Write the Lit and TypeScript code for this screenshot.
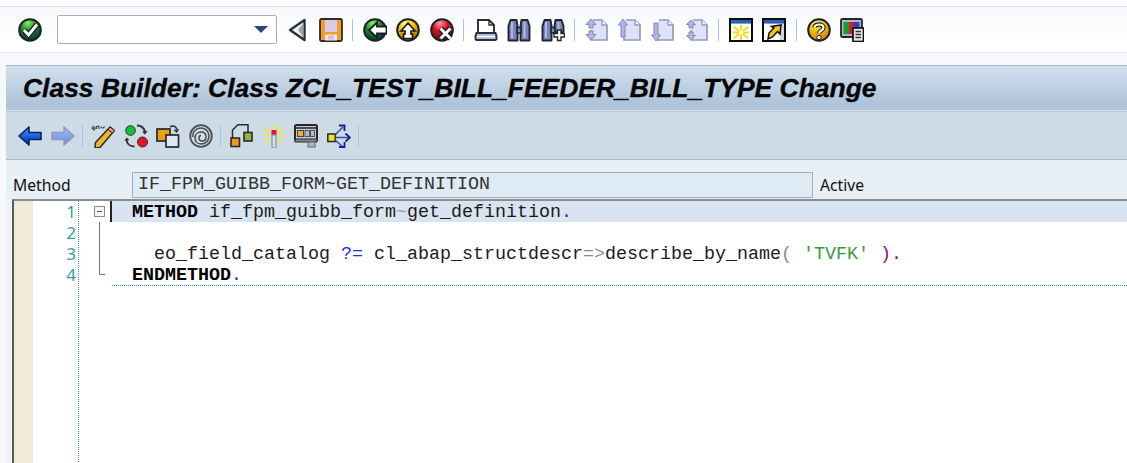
import { LitElement, html, css, svg } from "lit";
import { customElement } from "lit/decorators.js";

const sphere = (id: string, hi: string, mid: string, lo: string, glyph: unknown) => html`
  <svg viewBox="0 0 24 24" class="ic">
    <defs><radialGradient id=${id} cx=".4" cy=".18" r=".85">
      <stop offset="0" stop-color=${hi}></stop><stop offset=".42" stop-color=${mid}></stop><stop offset="1" stop-color=${lo}></stop>
    </radialGradient></defs>
    <circle cx="12" cy="12" r="10.8" fill=${`url(#${id})`} stroke="#1e2224" stroke-width="2"></circle>
    ${glyph}
  </svg>`;

const docGlyph = (inner: unknown) => html`
  <svg viewBox="0 0 24 24" class="ic">
    <path d="M8 2h9l5 5v15H6V12" fill="#e0e0f6" stroke="#9499bc" stroke-width="1.7"></path>
    <path d="M17 2v5h5" fill="#fff" stroke="#9499bc" stroke-width="1.3"></path>
    ${inner}
  </svg>`;

const winIcon = (inner: unknown) => html`
  <svg viewBox="0 0 24 24" class="ic">
    <rect x="1" y="1" width="22" height="22" fill="#fff" stroke="#0c0c0c" stroke-width="2"></rect>
    <rect x="2" y="2" width="20" height="3.6" fill="#2a62b4"></rect>
    ${inner}
  </svg>`;

const arrowUD = "#b0b5e2";

const icons = {
  check: sphere("gChk", "#8cf06a", "#1c8a2c", "#0a2c3a", svg`<path d="M6 12l4.500 5L19 6.500" fill="none" stroke="#1c1c1c" stroke-width="5.200"></path><path d="M6 12l4.500 5L19 6.500" fill="none" stroke="#fff" stroke-width="2.900"></path>`),
  tri: html`<svg viewBox="0 0 24 24" class="ic"><path d="M19.500 2L5 12l14.500 10z" fill="#f0f2f6" stroke="#2c3038" stroke-width="2.400" stroke-linejoin="round"></path><path d="M18.500 4.500v15L13 12z" fill="#9ea3aa"></path></svg>`,
  save: html`<svg viewBox="0 0 24 24" class="ic">
    <rect x="1" y="1" width="22" height="22" rx="1.500" fill="#f0a028" stroke="#2e2c28" stroke-width="1.800"></rect>
    <rect x="6" y="2" width="12" height="12" fill="#dccbe8"></rect>
    <rect x="6" y="16.500" width="12" height="6" fill="#efe6ee"></rect><rect x="9" y="17.500" width="6" height="4" fill="#cfc4d6"></rect>
  </svg>`,
  back: sphere("gBack", "#8cf06a", "#1c8a2c", "#0a2c3a", svg`<path d="M23.500 8.500h-9.500V4.500L6 12l8 7.500v-4h9.500z" fill="#fff" stroke="#1c1c1c" stroke-width="1.800"></path>`),
  up: sphere("gUp", "#fff8a8", "#f2c800", "#9a5c10", svg`<path d="M12 5l-7 8h4v3H7.500v4.500h9V16H15v-3h4z" fill="#fff" stroke="#1c1c1c" stroke-width="1.700"></path>`),
  cancel: sphere("gX", "#ff9a9a", "#d8142c", "#4a0a14", svg`<path d="M10.500 10.500l10 10M20.500 10.500l-10 10" stroke="#1c1c1c" stroke-width="5.600"></path><path d="M10.500 10.500l10 10M20.500 10.500l-10 10" stroke="#fff" stroke-width="3"></path>`),
  print: html`<svg viewBox="0 0 24 24" class="ic">
    <path d="M4 15V2h11l5 5v8" fill="#fff" stroke="#2a2e36" stroke-width="1.900"></path><path d="M15 2v5h5" fill="none" stroke="#2a2e36" stroke-width="1.400"></path>
    <path d="M2.500 15h19l1 3v3l-1 1h-19l-1-1v-3z" fill="#b4bcda" stroke="#2a2e36" stroke-width="1.900"></path><path d="M3 18.600h18" stroke="#fff" stroke-width="1.200"></path>
  </svg>`,
  find: html`<svg viewBox="0 0 24 24" class="ic">
    <path d="M1.500 8l2-6h6l1 6v14.500h-9zM13.500 8l1-6h6l2 6v14.500h-9z" fill="#7a84bc" stroke="#22242e" stroke-width="1.900" stroke-linejoin="round"></path>
    <rect x="10" y="9.500" width="4" height="5.500" fill="#7a84bc" stroke="#22242e" stroke-width="1.700"></rect>
    <path d="M5 4v16M17.500 4v16" stroke="#b6bee4" stroke-width="1.800"></path>
  </svg>`,
  findNext: html`<svg viewBox="0 0 24 24" class="ic">
    <path d="M1.500 8l2-6h6l1 6v14.500h-9zM13.500 8l1-6h6l2 6v6h-9z" fill="#7a84bc" stroke="#22242e" stroke-width="1.900" stroke-linejoin="round"></path>
    <rect x="10" y="9.500" width="4" height="5.500" fill="#7a84bc" stroke="#22242e" stroke-width="1.700"></rect>
    <path d="M5 4v16M17.500 4v8" stroke="#b6bee4" stroke-width="1.800"></path>
    <path d="M16.500 12h3.500v3.500h3.500v3.500H20v3.500h-3.500V19H13v-3.500h3.500z" fill="#fff" stroke="#22242e" stroke-width="1.400"></path>
  </svg>`,
  first: docGlyph(svg`<path d="M6 1L1 6.500h3V10h4V6.500h3zM6 22l5-5.500H8V13H4v3.500H1z" fill=${arrowUD} stroke="#8288b4"></path>`),
  prev: docGlyph(svg`<path d="M5 1L.5 7H3v12h4V7h2.500z" fill=${arrowUD} stroke="#8288b4"></path>`),
  next: docGlyph(svg`<path d="M5 23L.5 17H3V5h4v12h2.500z" fill=${arrowUD} stroke="#8288b4"></path>`),
  last: docGlyph(svg`<path d="M6 2L1.500 6.500H4V10h4V6.500h2.500zM6 22l4.500-4.500H8V14H4v3.500H1.500z" fill=${arrowUD} stroke="#8288b4"></path>`),
  newWin: winIcon(svg`<path d="M12 7v15M5 9l14 11M19 9L5 20M4 14.500h16" stroke="#f4dc10" stroke-width="2"></path><circle cx="12" cy="14.500" r="2.200" fill="#fff"></circle>`),
  jump: winIcon(svg`<rect x="18" y="6" width="4" height="16" fill="#d4d4d8"></rect><path d="M6 21l1-6 5-5-2.500-1.500L19 7l-1 9-2.500-2.500L10.500 19z" fill="#f2c818" stroke="#111" stroke-width="1.500"></path>`),
  help: sphere("gHelp", "#fff8a8", "#f5c400", "#e0701a", svg`<path d="M7.500 9.500C8 5.500 16.500 5.500 16.500 9.500c0 3-4.500 3-4.500 6" fill="none" stroke="#1c1c1c" stroke-width="4.400"></path><path d="M7.500 9.500C8 5.500 16.500 5.500 16.500 9.500c0 3-4.500 3-4.500 6" fill="none" stroke="#fff" stroke-width="2.200"></path><circle cx="12" cy="19.500" r="2.200" fill="#fff" stroke="#1c1c1c"></circle>`),
  layout: html`<svg viewBox="0 0 24 24" class="ic">
    <rect x="1" y="1" width="21" height="18" rx="1.500" fill="#b4b4b8" stroke="#262626" stroke-width="1.800"></rect>
    <rect x="3.500" y="4" width="5.500" height="12" fill="#12a02c"></rect><rect x="9" y="4" width="5" height="12" fill="#e01830"></rect><rect x="14" y="4" width="5.500" height="12" fill="#1c40d0"></rect>
    <rect x="13" y="10" width="10.500" height="13.500" fill="#e8e8ea" stroke="#111" stroke-width="1.700"></rect>
    <path d="M15.500 13.500h5.500M15.500 16.500h5.500M15.500 19.500h5.500" stroke="#333" stroke-width="1.500"></path>
  </svg>`,
  aBack: html`<svg viewBox="0 0 24 24" class="ic"><defs><linearGradient id="gBl" x1="0" y1="0" x2="0" y2="1"><stop offset="0" stop-color="#38a0f8"></stop><stop offset="1" stop-color="#0820c8"></stop></linearGradient></defs><path d="M1 12l10-9v5.500h12v7H11V21z" fill="url(#gBl)" stroke="#0a2450" stroke-width="1.600" stroke-linejoin="round"></path></svg>`,
  aFwd: html`<svg viewBox="0 0 24 24" class="ic"><defs><linearGradient id="gBl2" x1="0" y1="0" x2="0" y2="1"><stop offset="0" stop-color="#9cc8ec"></stop><stop offset="1" stop-color="#7080e4"></stop></linearGradient></defs><path d="M23 12L13 3v5.500H1v7h12V21z" fill="url(#gBl2)" stroke="#8a9ab8" stroke-width="1.400" stroke-linejoin="round"></path></svg>`,
  syntax: html`<svg viewBox="0 0 24 24" class="ic">
    <path d="M1 5c0-3 3-3 3-1s-2.500 3-1.500 0M5.500 5V3c1-1.500 2.500-1 2.500 0v2M10 2.500c0 2 3 2 3.500 0" fill="none" stroke="#444" stroke-width="1.200"></path>
    <path d="M19 3l4.500 3.500L9 23.500l-5 .5 .5-5.500z" fill="#f2b428" stroke="#2e2818" stroke-width="1.500" stroke-linejoin="round"></path>
    <path d="M19 3l4.500 3.500-2 2.500-4.500-3.500z" fill="#e89a9a" stroke="#2e2818" stroke-width="1"></path>
  </svg>`,
  activate: html`<svg viewBox="0 0 24 24" class="ic">
    <path d="M13 1.500c4 0 7 2 8 6.500M10.500 22.500c-4 0-7.500-2-8-7" fill="none" stroke="#2e2e2e" stroke-width="1.800"></path>
    <path d="M18 7.500l3 3 2.500-3.500zM5.500 16l-3-2.500L.5 17z" fill="#2e2e2e"></path>
    <circle cx="6.500" cy="6.500" r="4.800" fill="#12c030" stroke="#2e2e2e"></circle>
    <circle cx="18.500" cy="18" r="5" fill="#e8142c" stroke="#2e2e2e"></circle>
  </svg>`,
  where: html`<svg viewBox="0 0 24 24" class="ic">
    <rect x="1" y="5" width="13" height="12" fill="#f29a20" stroke="#2a2a26" stroke-width="1.700"></rect>
    <rect x="10" y="11" width="12.500" height="12" fill="#dfe8f4" stroke="#2a2a26" stroke-width="1.700"></rect>
    <path d="M14 3c3-2 6-1 7 2.500" fill="none" stroke="#2e2e2e" stroke-width="1.600"></path><path d="M17.500 6l3.500 3 2-4z" fill="#2e2e2e"></path>
  </svg>`,
  spiral: html`<svg viewBox="0 0 24 24" class="ic" fill="none" stroke="#4a4d52" stroke-width="1.500">
    <circle cx="12" cy="12" r="10.800" stroke-width="1.800"></circle>
    <path d="M4 13c-1-6 4-9 8-9s8 3 8 8-4 8-8 8-6-3-6-6 2-6 6-6 5 2 5 5-2 4-4 4-3-1-3-3 1-2.500 2-2.500"></path>
  </svg>`,
  hier: html`<svg viewBox="0 0 24 24" class="ic">
    <path d="M3.500 14V6L9 .8H19V8" fill="none" stroke="#2a2a2a" stroke-width="1.500"></path>
    <rect x="2" y="14" width="8.500" height="8.500" fill="#f09a1c" stroke="#2a2a2a" stroke-width="1.600"></rect>
    <rect x="15" y="8.500" width="8" height="8.500" fill="#9ab044" stroke="#2a2a2a" stroke-width="1.600"></rect>
  </svg>`,
  magic: html`<svg viewBox="0 0 24 24" class="ic">
    <path d="M12 0v5M3 3l5 5M21 3l-5 5M1 11h6M23 11h-6M4 19l4-4M20 19l-4-4" stroke="#f2ea30" stroke-width="1.800"></path>
    <rect x="9.500" y="6" width="5" height="5" fill="#ea1428"></rect>
    <rect x="10" y="11" width="4" height="13" fill="#d8e2ea" stroke="#7f929c" stroke-width="1.200"></rect>
  </svg>`,
  screen: html`<svg viewBox="0 0 24 24" class="ic">
    <rect x="1" y="1" width="22" height="16" rx="1.500" fill="#c8c8d4" stroke="#262626" stroke-width="2"></rect>
    <path d="M1 4h22" stroke="#262626" stroke-width="1.500"></path>
    <rect x="3.500" y="6.500" width="6" height="6" fill="#f0a838" stroke="#444"></rect>
    <rect x="11" y="6.500" width="4.500" height="6" fill="#aabbd2" stroke="#555"></rect><rect x="16.500" y="6.500" width="4" height="6" fill="#aabbd2" stroke="#555"></rect>
    <path d="M1 15h22v3H1z" fill="#8a8a90" stroke="#262626"></path><rect x="14" y="18" width="7" height="5" fill="#b0b6c0" stroke="#667"></rect>
  </svg>`,
  navigate: html`<svg viewBox="0 0 24 24" class="ic">
    <rect x=".8" y="10" width="7.500" height="7.500" fill="#f2e618" stroke="#262626" stroke-width="1.500"></rect>
    <path d="M8 13.500h14M8 11l8-8M8 16l8 7" stroke="#3a48a8" stroke-width="1.500" fill="none"></path>
    <path d="M18.500 9.500l4.500 4-4.500 4M12 1.500h5.500V7M12 23h5.500v-5" stroke="#141c90" stroke-width="1.800" fill="none"></path>
  </svg>`,
};

const sep = html`<span class="sep"><i></i></span>`;
const cell = (i: unknown) => html`<span class="cell">${i}</span>`;

@customElement("app-root")
export class AppRoot extends LitElement {
  static styles = css`
    :host { display: block; width: 1127px; height: 463px; overflow: hidden; background: #fff; font-family: "Noto Sans", "Liberation Sans", sans-serif; color: #111; }
    .topbar { margin-top: 6px; height: 45px; border-top: 1px solid #e0e4ec; border-bottom: 1px solid #e3e6ec; background: linear-gradient(#f6f8fb, #fff 70%); display: flex; align-items: center; padding-left: 13.5px; }
    .cell { width: 33.3px; height: 24px; display: flex; justify-content: center; flex: none; }
    .ic { width: 24px; height: 24px; display: block; flex: none; }
    .sep { width: 11px; height: 22px; display: flex; justify-content: center; flex: none; }
    .sep i { width: 1px; height: 100%; background: #a9c4dc; display: block; }
    .combo { box-sizing: border-box; width: 220px; height: 29px; margin: 0 4px 0 10px; background: #fff; border: 1px solid #a8aeb4; border-radius: 2px; display: flex; align-items: center; justify-content: flex-end; padding-right: 8px; flex: none; }
    .combo b { width: 0; height: 0; border-top: 7px solid #2c4478; border-left: 7px solid transparent; border-right: 7px solid transparent; }
    .shell { height: 410px; background: #f6f8fc; padding: 12px 0 0 6px; box-sizing: border-box; }
    .title { box-sizing: border-box; height: 46px; border-top: 1px solid #a4b4c4; background: linear-gradient(#d2e0ed, #aec4db 85%); border-bottom: 1px solid #d6e2ec; padding-left: 17px; display: flex; align-items: center; font: italic bold 26.45px "Liberation Sans", sans-serif; -webkit-text-stroke: 0.35px #050505; color: #050505; white-space: nowrap; }
    .apptools { box-sizing: border-box; height: 49px; background: #cddbe6; border-top: 1px solid #b4c4d2; border-bottom: 1px solid #a9b9c5; display: flex; align-items: center; padding-left: 7.75px; }
    .apptools .cell { width: 32.5px; }
    .apptools .sep { width: 8px; }
    .meta { height: 39px; box-sizing: border-box; background: #e8eff6; display: flex; align-items: center; padding: 10px 0 0 7px; font-size: 15.7px; }
    .meta .lbl { width: 119px; }
    .field { box-sizing: border-box; width: 681px; height: 26px; background: #deeaf4; border: 1px solid #a4aeb4; padding-left: 5px; display: flex; align-items: center; font: 18.33px "Liberation Mono", monospace; color: #333; margin-right: 7px; }
    .wrap { background: #eef3f8; padding-left: 6px; }
    .editor { height: 263px; border-top: 2px solid #8a8d90; border-left: 2px solid #5a5a5a; display: flex; background: #fff; position: relative; }
    .beige { width: 19px; background: #f2ead8; flex: none; }
    .nums { box-sizing: border-box; width: 46px; border-right: 1px dotted #3aa79a; flex: none; text-align: right; padding: 0 2px 0 0; font: 17px/21px "Noto Sans", sans-serif; color: #3c9aa4; }
    .fold { width: 31px; flex: none; position: relative; }
    .box { position: absolute; left: 15px; top: 5px; width: 9px; height: 9px; border: 1px solid #8a8a8a; background: #f4f4f4; }
    .box::after { content: ""; position: absolute; left: 2px; right: 2px; top: 4px; height: 1px; background: #555; }
    .tree { position: absolute; left: 20px; top: 21px; width: 5px; height: 52px; border-left: 1px solid #777; border-bottom: 1px solid #777; }
    .code { flex: 1; font: 18.33px/23px "Liberation Mono", monospace; color: #1c1c1c; }
    .ln { height: 21px; padding-left: 20px; border-left: 2px solid transparent; white-space: pre; }
    .ln.cur { background: #d9e4f2; border-left-color: #2a2018; }
    .end { border-bottom: 1px dotted #3aa79a; height: 22px; box-sizing: border-box; }
    .kw { font-weight: 700; color: #000; }
    .tl { color: #9aa0a0; }
    .op { color: #1a30e0; }
    .ar { color: #8a8a8a; }
    .st { color: #3a9c3a; }
    .pu { color: #80107a; }
  `;

  render() {
    const i = icons;
    return html`
      <div class="topbar">
        ${cell(i.check)}
        <span class="combo"><b></b></span>
        ${cell(i.tri)}${cell(i.save)}${sep}
        ${cell(i.back)}${cell(i.up)}${cell(i.cancel)}${sep}
        ${cell(i.print)}${cell(i.find)}${cell(i.findNext)}${sep}
        ${cell(i.first)}${cell(i.prev)}${cell(i.next)}${cell(i.last)}${sep}
        ${cell(i.newWin)}${cell(i.jump)}${sep}
        ${cell(i.help)}${cell(i.layout)}
      </div>
      <div class="shell">
        <div class="title">Class Builder: Class ZCL_TEST_BILL_FEEDER_BILL_TYPE Change</div>
        <div class="apptools">
          ${cell(i.aBack)}${cell(i.aFwd)}${sep}
          ${cell(i.syntax)}${cell(i.activate)}${cell(i.where)}${cell(i.spiral)}${sep}
          ${cell(i.hier)}${cell(i.magic)}${cell(i.screen)}${cell(i.navigate)}${sep}
        </div>
        <div class="meta">
          <span class="lbl">Method</span>
          <span class="field">IF_FPM_GUIBB_FORM~GET_DEFINITION</span>
          <span>Active</span>
        </div>
        <div class="wrap">
          <div class="editor">
            <div class="beige"></div>
            <div class="nums">1<br />2<br />3<br />4</div>
            <div class="fold"><span class="box"></span><span class="tree"></span></div>
            <div class="code">
              <div class="ln cur"><span class="kw">METHOD</span> if_fpm_guibb_form<span class="tl">~</span>get_definition<span class="pu">.</span></div>
              <div class="ln"></div>
              <div class="ln">  eo_field_catalog <span class="op">?=</span> cl_abap_structdescr<span class="ar">=&gt;</span>describe_by_name<span class="ar">(</span> <span class="st">'TVFK'</span> <span class="pu">).</span></div>
              <div class="ln end"><span class="kw">ENDMETHOD</span><span class="pu">.</span></div>
            </div>
          </div>
        </div>
      </div>
    `;
  }
}
